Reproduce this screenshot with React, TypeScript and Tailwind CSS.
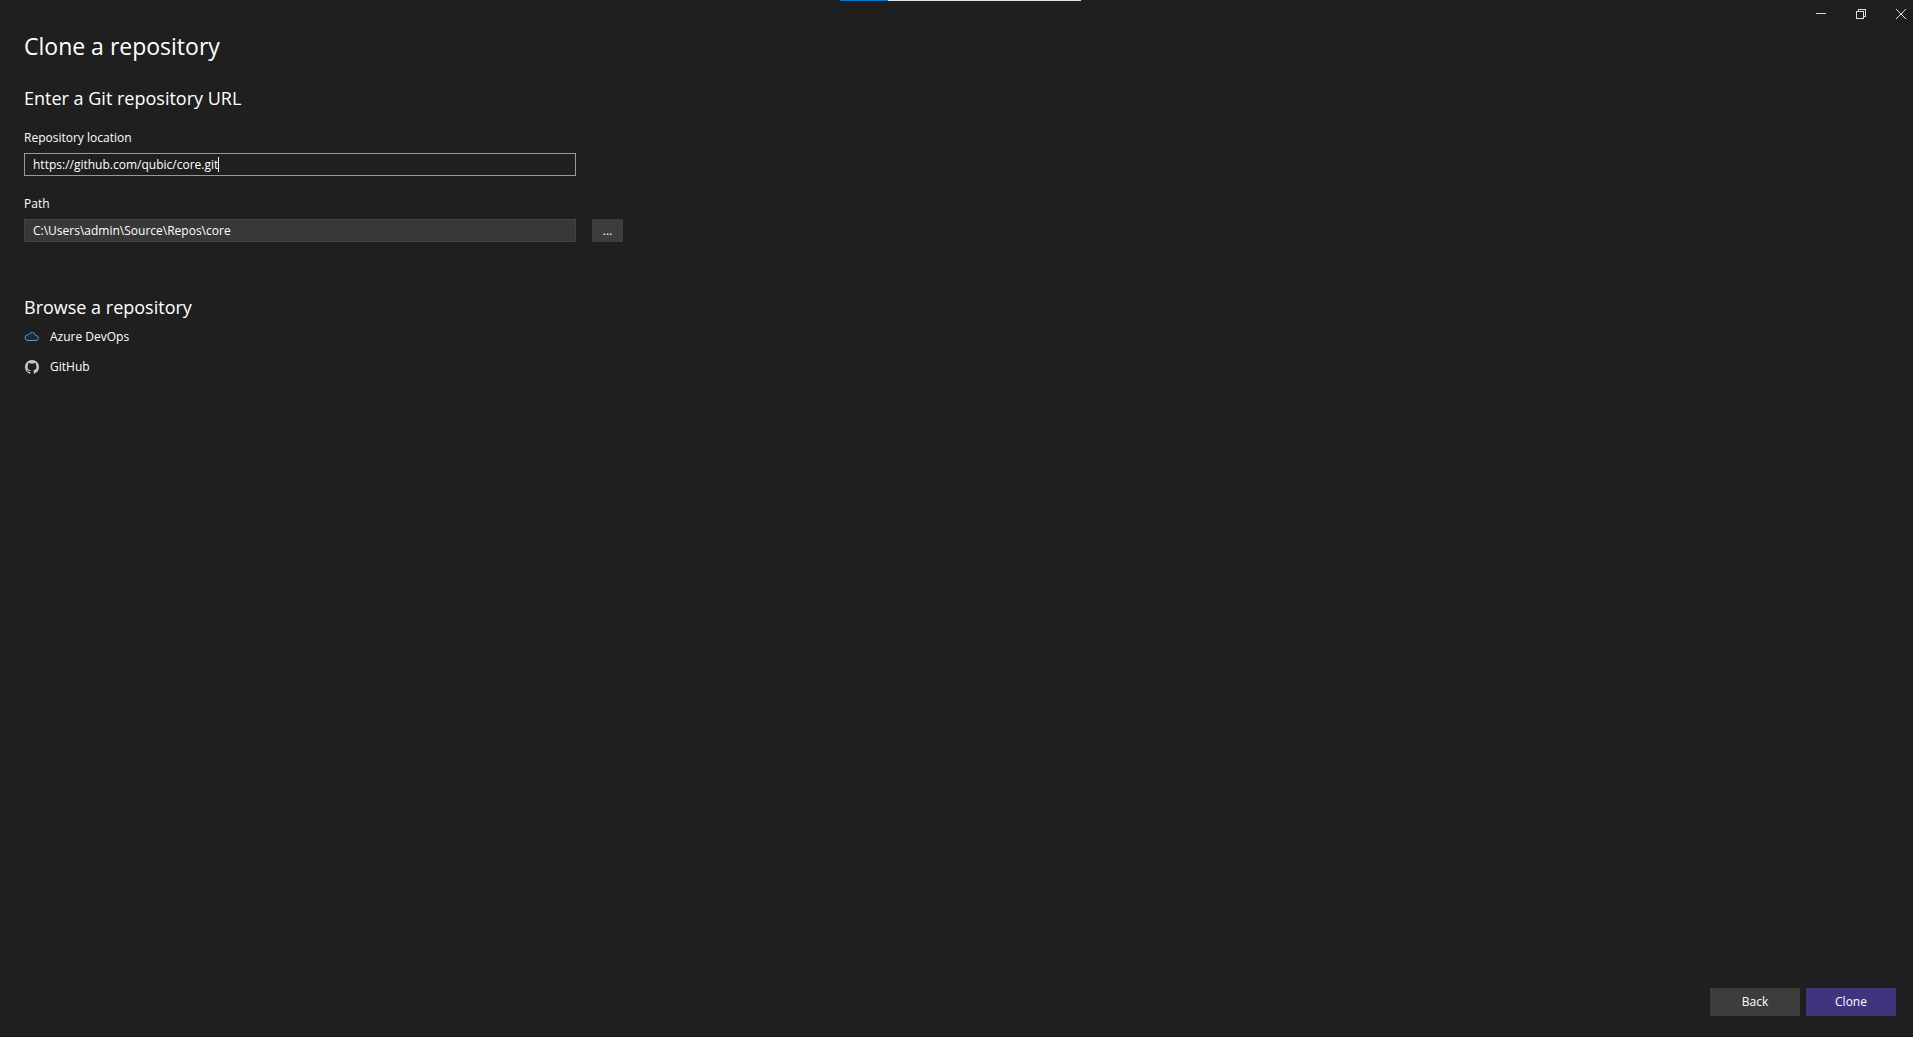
import { useState } from 'react';

function TaskProgress() {
  return (
    <div className="absolute inset-x-0 top-0 flex h-px justify-center pl-2">
      <div className="flex w-[241px]">
        <div className="w-12 bg-[#0078d4]" />
        <div className="grow bg-[#dfe3df]" />
      </div>
    </div>
  );
}

function WindowControls() {
  return (
    <div className="absolute top-0 right-0 flex gap-4 text-[#dcdcdc]">
      <button type="button" aria-label="Minimize" className="flex h-7 w-6 items-center justify-center">
        <svg width="12" height="12" viewBox="0 0 12 12" fill="none" stroke="currentColor" shapeRendering="crispEdges">
          <path d="M1 5.5h10" />
        </svg>
      </button>
      <button type="button" aria-label="Restore" className="flex h-7 w-6 items-center justify-center">
        <svg width="12" height="12" viewBox="0 0 12 12" fill="none" stroke="currentColor" shapeRendering="crispEdges">
          <path d="M1.5 3.5h7v7h-7zM3.5 3.5v-2h7v7h-2" />
        </svg>
      </button>
      <button type="button" aria-label="Close" className="flex h-7 w-6 items-center justify-center">
        <svg width="12" height="12" viewBox="0 0 12 12" fill="none" stroke="currentColor">
          <path d="M1 1l10 10M11 1L1 11" />
        </svg>
      </button>
    </div>
  );
}

function CloudIcon() {
  return (
    <svg width="16" height="16" viewBox="0 0 16 16" fill="#4a9bd6" fillOpacity="0.1" stroke="#4a9bd6" strokeLinejoin="round">
      <path d="M4 11.500h8a2.500 2.500 0 0 0 .4-4.950h-.9A3.400 3.400 0 0 0 5 5.500a3 3 0 0 0-1 0.200 2.900 2.900 0 0 0 0 5.800z" />
    </svg>
  );
}

function GitHubIcon() {
  return (
    <svg width="14" height="14" viewBox="0 0 16 16" fill="#c8c8c8" className="mx-px">
      <path d="M8 0C3.580 0 0 3.580 0 8c0 3.540 2.290 6.530 5.470 7.590.4.070.550-.170.550-.380 0-.190-.010-.820-.010-1.490-2.010.370-2.530-.490-2.690-.940-.090-.230-.480-.940-.820-1.130-.280-.150-.680-.520-.010-.530.630-.010 1.080.580 1.230.820.720 1.210 1.870.870 2.330.660.070-.520.280-.870.510-1.070-1.780-.200-3.640-.890-3.640-3.950 0-.870.310-1.590.820-2.150-.080-.200-.360-1.020.080-2.120 0 0 .670-.210 2.200.820.640-.180 1.320-.270 2-.270s1.360.090 2 .270c1.530-1.040 2.200-.820 2.200-.820.440 1.100.160 1.920.080 2.120.510.560.820 1.270.820 2.150 0 3.070-1.870 3.750-3.650 3.950.290.250.540.730.540 1.480 0 1.070-.010 1.930-.010 2.200 0 .210.150.460.550.380A8.010 8.010 0 0 0 16 8c0-4.420-3.580-8-8-8z" />
    </svg>
  );
}

export default function App() {
  const [url, setUrl] = useState('https://github.com/qubic/core.git');
  const [path, setPath] = useState('C:\\Users\\admin\\Source\\Repos\\core');

  return (
    <div className="relative flex min-h-screen flex-col border-b border-[#1a1516] bg-[#1f1f1f] font-['Open_Sans','Noto_Sans',sans-serif] text-[12px] leading-4 text-white">
      <TaskProgress />
      <WindowControls />

      <main className="grow px-6 pt-[30px]">
        <h1 className="text-[23px] leading-8">Clone a repository</h1>

        <section className="mt-6">
          <h2 className="text-[18px] leading-6">Enter a Git repository URL</h2>

          <label htmlFor="url" className="mt-5 block">Repository location</label>
          <div className="mt-[7px] flex h-[23px] w-[552px] max-w-full items-center border border-[#999999] pl-2">
            <input
              id="url"
              value={url}
              onChange={(e) => setUrl(e.target.value)}
              className="[field-sizing:content] outline-none"
            />
            <span className="h-[15px] w-px bg-white" />
          </div>

          <label htmlFor="path" className="mt-5 block">Path</label>
          <div className="mt-[7px] flex gap-4">
            <input
              id="path"
              value={path}
              onChange={(e) => setPath(e.target.value)}
              className="h-[23px] w-[552px] border border-[#424242] bg-[#383838] pl-2 outline-none"
            />
            <button type="button" aria-label="Browse for a folder" className="h-[23px] w-[31px] bg-[#3d3d3d]">...</button>
          </div>
        </section>

        <section className="mt-[53px]">
          <h2 className="text-[18px] leading-6">Browse a repository</h2>
          <ul className="mt-2.5 flex flex-col items-start gap-3.5">
            <li>
              <a href="#azure-devops" className="flex items-center gap-2.5">
                <CloudIcon />
                Azure DevOps
              </a>
            </li>
            <li>
              <a href="#github" className="flex items-center gap-2.5">
                <GitHubIcon />
                GitHub
              </a>
            </li>
          </ul>
        </section>
      </main>

      <footer className="flex justify-end gap-1.5 pr-[17px] pb-5">
        <button type="button" className="h-7 w-[90px] bg-[#3d3d3d]">Back</button>
        <button type="button" className="h-7 w-[90px] bg-[#41347f]">Clone</button>
      </footer>
    </div>
  );
}
